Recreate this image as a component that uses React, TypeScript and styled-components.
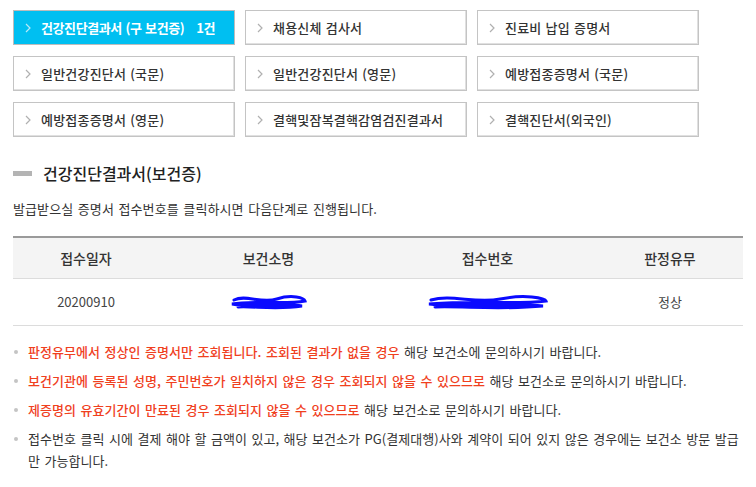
import React, { FC } from "react";
import styled, { createGlobalStyle, css } from "styled-components";

const GlobalStyle = createGlobalStyle`
  html, body {
    margin: 0;
    padding: 0;
    background: #ffffff;
  }
  body {
    font-family: "Noto Sans CJK KR", "Noto Sans", sans-serif;
    color: #333333;
  }
  * {
    box-sizing: border-box;
  }
`;

interface CertItem {
  label: string;
  count?: string;
  active?: boolean;
}

const certItems: CertItem[] = [
  { label: "건강진단결과서 (구 보건증)", count: "1건", active: true },
  { label: "채용신체 검사서" },
  { label: "진료비 납입 증명서" },
  { label: "일반건강진단서 (국문)" },
  { label: "일반건강진단서 (영문)" },
  { label: "예방접종증명서 (국문)" },
  { label: "예방접종증명서 (영문)" },
  { label: "결핵및잠복결핵감염검진결과서" },
  { label: "결핵진단서(외국인)" },
];

const Chevron: FC<{ color: string }> = ({ color }) => (
  <svg width="6" height="10" viewBox="0 0 6 10">
    <path d="M1 1 L5 5 L1 9" fill="none" stroke={color} strokeWidth="1.2" />
  </svg>
);

// masking scribble drawn over private data
const Scribble: FC<{ width: number }> = ({ width }) => (
  <svg width={width} height="18" viewBox={`0 0 ${width} 18`}>
    <path
      d={`M4 6 C ${width * 0.2} 0, ${width * 0.4} 10, ${width * 0.6} 5 S ${width - 4} 4, ${width - 3} 7
          C ${width * 0.7} 11, ${width * 0.3} 6, 2 10 C ${width * 0.3} 14, ${width * 0.7} 9, ${width - 6} 12
          C ${width * 0.6} 16, ${width * 0.3} 12, 8 13`}
      fill="none"
      stroke="#0a0aff"
      strokeWidth="3"
      strokeLinecap="round"
    />
  </svg>
);

export default function App() {
  return (
    <>
      <GlobalStyle />
      <Page>
        <ButtonGrid>
          {certItems.map((item) => (
            <CertButton key={item.label} active={item.active}>
              <Chevron color={item.active ? "#b9e9f7" : "#b0b0b0"} />
              <CertLabel active={item.active}>
                {item.label}
                {item.count && <Count>{item.count}</Count>}
              </CertLabel>
            </CertButton>
          ))}
        </ButtonGrid>

        <SectionTitle>
          <TitleBar />
          건강진단결과서(보건증)
        </SectionTitle>
        <Description>
          발급받으실 증명서 접수번호를 클릭하시면 다음단계로 진행됩니다.
        </Description>

        <Table>
          <colgroup>
            <col style={{ width: "20%" }} />
            <col style={{ width: "30%" }} />
            <col style={{ width: "30%" }} />
            <col style={{ width: "20%" }} />
          </colgroup>
          <thead>
            <tr>
              <Th>접수일자</Th>
              <Th>보건소명</Th>
              <Th>접수번호</Th>
              <Th>판정유무</Th>
            </tr>
          </thead>
          <tbody>
            <tr>
              <Td>20200910</Td>
              <Td>
                <Scribble width={78} />
              </Td>
              <Td>
                <Scribble width={122} />
              </Td>
              <Td>정상</Td>
            </tr>
          </tbody>
        </Table>

        <NoteList>
          <Note>
            <Red>
              판정유무에서 정상인 증명서만 조회됩니다. 조회된 결과가 없을 경우
            </Red>{" "}
            해당 보건소에 문의하시기 바랍니다.
          </Note>
          <Note>
            <Red>
              보건기관에 등록된 성명, 주민번호가 일치하지 않은 경우 조회되지 않을 수
              있으므로
            </Red>{" "}
            해당 보건소로 문의하시기 바랍니다.
          </Note>
          <Note>
            <Red>제증명의 유효기간이 만료된 경우 조회되지 않을 수 있으므로</Red>{" "}
            해당 보건소로 문의하시기 바랍니다.
          </Note>
          <Note>
            접수번호 클릭 시에 결제 해야 할 금액이 있고, 해당 보건소가 PG(결제대행)사와
            계약이 되어 있지 않은 경우에는 보건소 방문 발급만 가능합니다.
          </Note>
        </NoteList>
      </Page>
    </>
  );
}

const Page = styled.div`
  width: 756px;
  padding: 10px 13px 0 13px;
`;

const ButtonGrid = styled.div`
  display: grid;
  grid-template-columns: repeat(3, 222px);
  column-gap: 10px;
  row-gap: 11px;
`;

const CertButton = styled.div<{ active?: boolean }>`
  height: 35px;
  display: flex;
  align-items: center;
  gap: 10px;
  padding-left: 11px;
  border: 1px solid #c4c4c4;
  box-shadow: inset -1px -1px 0 #e0e0e0;
  background: #ffffff;
  ${(props) =>
    props.active &&
    css`
      background: #00bff1;
      border-color: #bcbcbc;
      box-shadow: none;
    `}
`;

const CertLabel = styled.span<{ active?: boolean }>`
  font-size: 13px;
  line-height: 18px;
  letter-spacing: ${(props) => (props.active ? "-0.4px" : "0.2px")};
  word-spacing: 1px;
  color: ${(props) => (props.active ? "#ffffff" : "#333333")};
  font-weight: ${(props) => (props.active ? 700 : 500)};
  white-space: nowrap;
`;

const Count = styled.span`
  margin-left: 12px;
`;

const SectionTitle = styled.h2`
  display: flex;
  align-items: center;
  gap: 11px;
  margin: 24px 0 0 0;
  font-size: 16px;
  line-height: 24px;
  font-weight: 500;
  color: #222222;
`;

const TitleBar = styled.span`
  display: block;
  width: 19px;
  height: 5px;
  background: #b4b4b4;
`;

const Description = styled.p`
  margin: 14px 0 0 0;
  font-size: 13px;
  line-height: 20px;
  color: #333333;
  letter-spacing: 0.1px;
  word-spacing: 1.5px;
`;

const Table = styled.table`
  width: 730px;
  margin-top: 17px;
  border-collapse: collapse;
  table-layout: fixed;
  border-top: 2px solid #9a9a9a;
`;

const Th = styled.th`
  height: 41px;
  background: #f4f4f4;
  border-bottom: 1px solid #dcdcdc;
  font-size: 14px;
  font-weight: 500;
  color: #333333;
  text-align: center;
  padding: 0;
`;

const Td = styled.td`
  height: 47px;
  border-bottom: 1px solid #dcdcdc;
  font-size: 13px;
  color: #444444;
  text-align: center;
  vertical-align: middle;
  padding: 0;
  svg {
    display: inline-block;
    vertical-align: middle;
  }
`;

const NoteList = styled.ul`
  list-style: none;
  margin: 15px 0 0 0;
  padding: 0;
  width: 730px;
`;

const Note = styled.li`
  position: relative;
  padding-left: 15px;
  margin-bottom: 7px;
  font-size: 13px;
  line-height: 22px;
  color: #333333;
  letter-spacing: 0.05px;
  word-spacing: 1.5px;
  &::before {
    content: "";
    position: absolute;
    left: 1px;
    top: 9px;
    width: 4px;
    height: 4px;
    border-radius: 50%;
    background: #c4c4c4;
  }
`;

const Red = styled.span`
  color: #f0401e;
  font-weight: 500;
`;
